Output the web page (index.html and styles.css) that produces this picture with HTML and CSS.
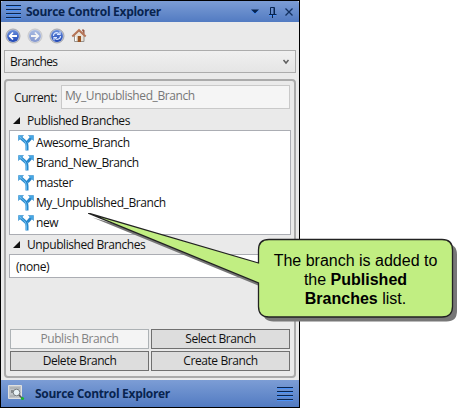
FILE: index.html
```html
<!DOCTYPE html>
<html lang="en">
<head>
<meta charset="utf-8">
<title>Source Control Explorer</title>
<link rel="stylesheet" href="styles.css">
</head>
<body>
<svg class="defs" width="0" height="0">
  <defs>
    <linearGradient id="blue" x1="0" y1="0" x2="0" y2="1"><stop offset="0" stop-color="#6a8fdc"/><stop offset="1" stop-color="#1e45b4"/></linearGradient>
    <linearGradient id="branchBlue" x1="0" y1="0" x2="1" y2="0"><stop offset="0" stop-color="#5bb8f0"/><stop offset="1" stop-color="#1d7fca"/></linearGradient>
    <symbol id="branch" viewBox="0 0 16 16">
      <path d="M3 3L7 6.500Q9 8 9 11V15.500M13 3L9.500 7" fill="none" stroke="#2787cc" stroke-width="3"/>
      <path d="M.5.5H5.500L.5 5.500ZM15.500.5H10.500L15.500 5.500Z" fill="#45a8e6" stroke="#3b91cd" stroke-width=".6"/>
      <path d="M1.500 1.500L6.500 6Q8.300 8 8.300 11V15" fill="none" stroke="#7bcbf8" stroke-width=".9"/>
    </symbol>
  </defs>
</svg>
<main class="window">
  <header class="titlebar">
    <svg class="grip" width="15" height="15"><path d="M0 2.500H15M0 6.500H15M0 10.500H15M0 14.500H15" stroke="#4b92f8"/><path d="M0 1.500H15M0 5.500H15M0 9.500H15M0 13.500H15" stroke="#08244f"/></svg>
    <h1>Source Control Explorer</h1>
    <svg class="controls" width="46" height="14"><path d="M1 5.500H9L5 9.500Z" fill="#4b92f8"/><path d="M1 4.500H9L5 8.500Z" fill="#08244f"/><path d="M20.500 9V2.500H24.500V9M19 9.500H26.500M22.500 10V13" fill="none" stroke="#08244f"/><path d="M24 3V9" stroke="#08244f"/><path d="M19 10.500H22M23 10.500H26" stroke="#4b92f8"/><path d="M35.500 3.500L42.500 10.500M42.500 3.500L35.500 10.500" stroke="#12305f" stroke-width="1.300"/></svg>
  </header>
  <nav class="toolbar">
    <svg width="16" height="16"><circle cx="8" cy="8" r="7" fill="#b9c4de" stroke="#a7a7aa"/><circle cx="8" cy="8" r="5.900" fill="url(#blue)"/><path d="M12 8H5M8 4.500L4.700 8 8 11.500" fill="none" stroke="#fff" stroke-width="1.800"/></svg>
    <svg width="16" height="16" class="faded"><circle cx="8" cy="8" r="7" fill="#b9c4de" stroke="#a7a7aa"/><circle cx="8" cy="8" r="5.900" fill="url(#blue)"/><path d="M4 8H11M8 4.500L11.300 8 8 11.500" fill="none" stroke="#fff" stroke-width="1.800"/></svg>
    <svg width="16" height="16"><circle cx="8" cy="8" r="7" fill="#b9c4de" stroke="#a7a7aa"/><circle cx="8" cy="8" r="5.900" fill="url(#blue)"/><path d="M4.500 8Q4.500 5 8 4.700L10 5.500M11.500 8Q11.500 11 8 11.300L6 10.500M11 3.500V6.500H8M5 12.500V9.500H8" fill="none" stroke="#dce8ff" stroke-width="1.200"/></svg>
    <svg width="16" height="16"><path d="M3.500 7V13.500H13V7L8 3Z" fill="#e9e4dc" stroke="#97938e"/><path d="M11 2H13V6" fill="#a75e43" stroke="#915443"/><path d="M1.300 8.500L8 2.200 14.700 8.500" fill="none" stroke="#b67557" stroke-width="2"/><path d="M6.700 14V8H10V14" fill="#9b5523"/><path d="M4.500 9V13" stroke="#fff"/></svg>
  </nav>
  <div class="combo"><span>Branches</span><svg width="8" height="6"><path d="M1.500 1L4 4 6.500 1" fill="none" stroke="#606060" stroke-width="1.500"/></svg></div>
  <section class="panel">
    <div class="current"><label>Current:</label><div class="field"><span>My_Unpublished_Branch</span></div></div>
    <h2 class="published"><svg width="8" height="8"><path d="M7 0V7H0Z" fill="#111"/></svg><span>Published Branches</span></h2>
    <ul class="branches">
      <li><svg width="16" height="16"><use href="#branch"/></svg><span>Awesome_Branch</span></li>
      <li><svg width="16" height="16"><use href="#branch"/></svg><span>Brand_New_Branch</span></li>
      <li><svg width="16" height="16"><use href="#branch"/></svg><span>master</span></li>
      <li><svg width="16" height="16"><use href="#branch"/></svg><span>My_Unpublished_Branch</span></li>
      <li><svg width="16" height="16"><use href="#branch"/></svg><span>new</span></li>
    </ul>
    <h2 class="unpublished"><svg width="8" height="8"><path d="M7 0V7H0Z" fill="#111"/></svg><span>Unpublished Branches</span></h2>
    <div class="none">(none)</div>
    <div class="buttons">
      <button disabled>Publish Branch</button><button>Select Branch</button>
      <button>Delete Branch</button><button>Create Branch</button>
    </div>
  </section>
  <footer class="statusbar">
    <svg width="17" height="17"><path d="M.5.5H13.500V13.500H.5Z" fill="#bfc3c6" stroke="#e0e0df"/><path d="M2 3H12M2 11H7" stroke="#a0a4a7"/><path d="M3 5H7V8H3Z" fill="#85898c"/><circle cx="8.500" cy="7.500" r="3.300" fill="#e8f1f5" stroke="#777d80"/><path d="M11 10L14 13" stroke="#555" stroke-width="1.500"/><circle cx="14.500" cy="13.500" r="1.600" fill="#18b62d"/></svg>
    <strong>Source Control Explorer</strong>
    <svg class="grip" width="16" height="15"><path d="M0 2.500H16M0 6.500H16M0 10.500H16M0 14.500H16" stroke="#4b92f8"/><path d="M0 1.500H16M0 5.500H16M0 9.500H16M0 13.500H16" stroke="#08244f"/></svg>
  </footer>
</main>
<aside class="callout">
  <svg width="380" height="114">
    <path class="shadow" d="M0 0L170.500 50V37Q170.500 26.500 181 26.500H354Q364.500 26.500 364.500 37V93.500Q364.500 104 354 104H181Q170.500 104 170.500 93.500V70Z" transform="translate(4.500 4.500)"/>
    <path class="bubble" d="M0 0L170.500 50V37Q170.500 26.500 181 26.500H354Q364.500 26.500 364.500 37V93.500Q364.500 104 354 104H181Q170.500 104 170.500 93.500V70Z"/>
  </svg>
  <p>The branch is added to<br>the <b>Published</b><br><b>Branches</b> list.</p>
</aside>
</body>
</html>
```
FILE: styles.css
```css
* { box-sizing: border-box; }
body { margin: 0; width: 468px; height: 408px; overflow: hidden; background: #fff; font: 12px/16px "Open Sans", "Noto Sans", sans-serif; letter-spacing: -.42px; color: #111; }
svg { display: block; flex: none; }
span, label, h1, strong { white-space: nowrap; }
.defs { position: absolute; }
.window { width: 300px; height: 408px; border: 1px solid #000; background: #eaeaea; display: flex; flex-direction: column; }
.titlebar, .statusbar { display: flex; align-items: center; background: linear-gradient(#7c9dd5, #527bc2); color: #08244f; padding: 0 6px 0 5px; flex: none; letter-spacing: -.3px; }
.titlebar { height: 21px; border-radius: 2px 2px 0 0; }
.titlebar h1, .statusbar strong { font-size: 12px; line-height: 16px; font-weight: 700; margin: 0; }
.titlebar h1 { margin-left: 5px; }
.controls { margin-left: auto; margin-right: -3px; }
.toolbar { height: 28px; display: flex; gap: 6px; padding: 6px 4px; }
.faded { opacity: .5; }
.combo { height: 23px; margin: 0 3px; border: 1px solid #acacac; background: linear-gradient(#f0f0f0, #e5e5e5); display: flex; align-items: center; justify-content: space-between; padding: 0 5px; letter-spacing: -.6px; }
.panel { height: 299px; margin: 6px 3px 0; border: 2px solid #aaa; border-radius: 4px; padding: 4px 3px 5px; display: flex; flex-direction: column; }
.current { display: flex; height: 24px; padding: 0 1px 0 5px; align-items: center; justify-content: space-between; }
.current label { position: relative; top: 1px; }
.field { width: 229px; height: 24px; border: 1px solid #c9c9c9; background: #f5f5f5; color: #777; padding: 2px 3px; }
.panel h2 { margin: 0; font-size: 12px; line-height: 16px; font-weight: 400; display: flex; align-items: center; gap: 6px; padding-left: 4px; }
.panel .published { height: 21px; padding-top: 3px; }
.branches { height: 105px; margin: 0; padding: 2px 8px; list-style: none; border: 1px solid #abadb3; background: #fff; }
.branches li { height: 20px; display: flex; align-items: center; gap: 2px; }
.unpublished { height: 19px; }
.none { height: 24px; border: 1px solid #abadb3; background: #fff; padding: 4px 6px; }
.buttons { margin-top: auto; display: grid; grid-template-columns: 1fr 1fr; gap: 2px; padding: 0 1px 0; }
.buttons button { height: 20px; padding: 0; border: 1px solid #707070; background: #ddd; color: #111; font: inherit; letter-spacing: inherit; line-height: 16px; }
.buttons button:disabled { background: #f4f4f4; border-color: #adb2b5; color: #838383; }
.statusbar { height: 27px; margin-top: auto; }
.statusbar > :first-child { margin-left: 2px; }
.statusbar strong { margin-left: 10px; }
.statusbar .grip { margin-left: auto; }
.callout { position: absolute; left: 88px; top: 213px; width: 380px; height: 114px; }
.shadow { fill: #777; }
.bubble { fill: #c1ee82; stroke: #222; stroke-width: 1.3; }
.callout p { position: absolute; left: 170px; top: 38px; width: 195px; margin: 0; text-align: center; font: 16px/19px "Liberation Sans", sans-serif; letter-spacing: 0; color: #000; }
```
